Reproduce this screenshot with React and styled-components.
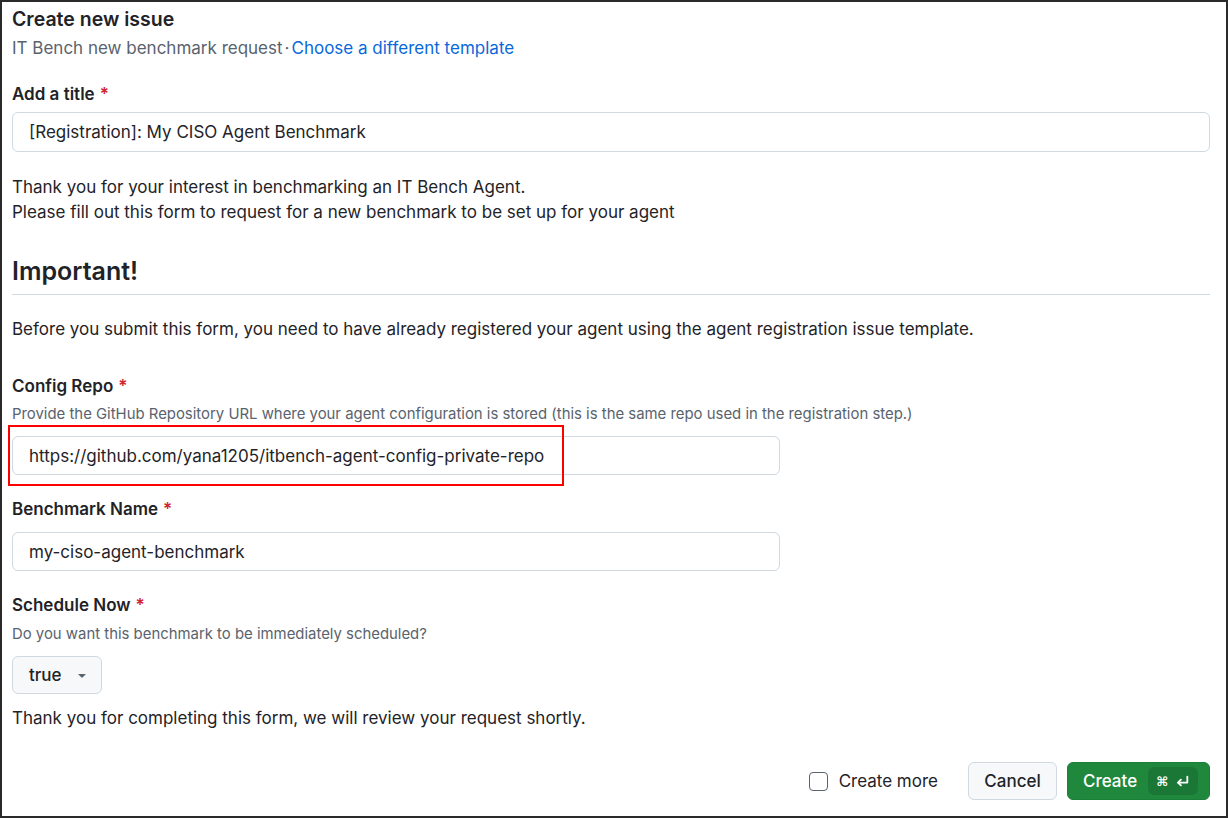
import React from "react";
import styled, { createGlobalStyle } from "styled-components";

const Global = createGlobalStyle`
  html, body { margin: 0; padding: 0; background: #fff; }
  body { font-family: Inter, "Noto Sans", "Liberation Sans", sans-serif; color: #1f2328; }
  * { box-sizing: border-box; }
`;

const Frame = styled.div`
  width: 1228px;
  height: 818px;
  border: 2px solid #2a2a2a;
  padding: 5px 16px 0 10px;
  display: flex;
  flex-direction: column;
  background: #fff;
`;

const PageTitle = styled.h1`
  margin: 0;
  font-size: 19.5px;
  line-height: 24px;
  font-weight: 600;
`;

const Subtitle = styled.div`
  margin-top: 5px;
  font-size: 17px;
  line-height: 24px;
  color: #59636e;
  display: flex;
  align-items: center;
`;

const Dot = styled.span`
  margin: 0 2px;
`;

const Link = styled.a`
  color: #0969da;
  text-decoration: none;
`;

const Field = styled.div`
  margin-top: ${(p) => p.$mt}px;
  display: flex;
  flex-direction: column;
`;

const Label = styled.label`
  font-size: 17px;
  line-height: 24px;
  font-weight: 600;
`;

const Req = styled.span`
  color: #d1242f;
  margin-left: 5px;
`;

const Hint = styled.div`
  margin-top: ${(p) => p.$mt}px;
  font-size: 14.9px;
  line-height: 20px;
  color: #59636e;
`;

const InputWrap = styled.div`
  position: relative;
  margin-top: ${(p) => p.$mt}px;
  width: ${(p) => p.$w};
`;

const Input = styled.div`
  height: ${(p) => p.$h}px;
  border: 1px solid #d1d9e0;
  border-radius: 6px;
  background: #fff;
  padding: 0 16px;
  display: flex;
  align-items: center;
  font-size: 17px;
  color: #1f2328;
`;

const Highlight = styled.div`
  position: absolute;
  left: -4px;
  top: -11px;
  width: 556px;
  height: 61px;
  border: 2px solid #ff0000;
  pointer-events: none;
`;

const Para = styled.p`
  margin: ${(p) => p.$mt}px 0 0;
  font-size: 17px;
  line-height: 25px;
`;

const Heading = styled.h2`
  margin: 31px 0 0;
  font-size: 25px;
  line-height: 30px;
  font-weight: 600;
  padding-bottom: 8px;
  border-bottom: 1px solid #d1d9e0;
`;

const SelectButton = styled.div`
  margin-top: 12px;
  width: 90px;
  height: 38px;
  border: 1px solid #d1d9e0;
  border-radius: 6px;
  background: #f6f8fa;
  display: flex;
  align-items: center;
  padding: 0 0 0 16px;
  gap: 12px;
  font-size: 17px;
  font-weight: 500;
`;

const Footer = styled.div`
  margin-top: auto;
  margin-bottom: 16px;
  display: flex;
  align-items: center;
  justify-content: flex-end;
  gap: 10px;
`;

const CheckRow = styled.label`
  display: flex;
  align-items: center;
  gap: 11px;
  font-size: 17px;
  margin-right: 20px;
`;

const CheckBox = styled.span`
  width: 19px;
  height: 19px;
  border: 1px solid #59636e;
  border-radius: 4px;
  background: #fff;
`;

const Button = styled.button`
  height: 38px;
  border-radius: 6px;
  font-family: inherit;
  font-size: 17px;
  font-weight: 500;
  display: flex;
  align-items: center;
  gap: 11px;
  padding: 0 15px;
  border: 1px solid ${(p) => (p.$primary ? "#1a7f37" : "#d1d9e0")};
  background: ${(p) => (p.$primary ? "#1f883d" : "#f6f8fa")};
  color: ${(p) => (p.$primary ? "#fff" : "#1f2328")};
  width: ${(p) => p.$w}px;
  justify-content: ${(p) => (p.$primary ? "flex-start" : "center")};
`;

const Kbd = styled.span`
  display: flex;
  align-items: center;
  gap: 7px;
  height: 28px;
  padding: 0 8px;
  border-radius: 6px;
  background: rgba(0, 0, 0, 0.12);
  font-size: 13px;
  font-weight: 700;
  font-family: "DejaVu Sans", sans-serif;
`;

const Caret = () => (
  <svg width="16" height="16" viewBox="0 0 16 16" fill="#59636e">
    <path d="m4.427 7.427 3.396 3.396a.25.25 0 0 0 .354 0l3.396-3.396A.25.25 0 0 0 11.396 7H4.604a.25.25 0 0 0-.177.427Z" />
  </svg>
);

const ReturnIcon = () => (
  <svg width="15" height="15" viewBox="0 0 14 14" fill="none" stroke="#fff" strokeWidth="1.7" strokeLinecap="round" strokeLinejoin="round">
    <path d="M11.5 2.5v5.5H3" />
    <path d="M5.5 5.3 2.8 8l2.7 2.7" />
  </svg>
);

export default function App() {
  return (
    <>
      <Global />
      <Frame>
        <PageTitle>Create new issue</PageTitle>
        <Subtitle>
          IT Bench new benchmark request<Dot>·</Dot>
          <Link href="#">Choose a different template</Link>
        </Subtitle>

        <Field $mt={22}>
          <Label>
            Add a title<Req>*</Req>
          </Label>
          <InputWrap $mt={6} $w="100%">
            <Input $h={40}>[Registration]: My CISO Agent Benchmark</Input>
          </InputWrap>
        </Field>

        <Para $mt={23}>
          Thank you for your interest in benchmarking an IT Bench Agent.
          <br />
          Please fill out this form to request for a new benchmark to be set up for your agent
        </Para>

        <Heading>Important!</Heading>

        <Para $mt={22}>
          Before you submit this form, you need to have already registered your agent using the agent registration issue template.
        </Para>

        <Field $mt={32}>
          <Label>
            Config Repo<Req>*</Req>
          </Label>
          <Hint $mt={6}>
            Provide the GitHub Repository URL where your agent configuration is stored (this is the same repo used in the registration step.)
          </Hint>
          <InputWrap $mt={12} $w="768px">
            <Input $h={39}>https://github.com/yana1205/itbench-agent-config-private-repo</Input>
            <Highlight />
          </InputWrap>
        </Field>

        <Field $mt={22}>
          <Label>
            Benchmark Name<Req>*</Req>
          </Label>
          <InputWrap $mt={11} $w="768px">
            <Input $h={39}>my-ciso-agent-benchmark</Input>
          </InputWrap>
        </Field>

        <Field $mt={22}>
          <Label>
            Schedule Now<Req>*</Req>
          </Label>
          <Hint $mt={7}>Do you want this benchmark to be immediately scheduled?</Hint>
          <SelectButton>
            true
            <Caret />
          </SelectButton>
        </Field>

        <Para $mt={12}>Thank you for completing this form, we will review your request shortly.</Para>

        <Footer>
          <CheckRow>
            <CheckBox />
            Create more
          </CheckRow>
          <Button $w={89}>Cancel</Button>
          <Button $primary $w={143}>
            Create
            <Kbd>
              <span>⌘</span>
              <ReturnIcon />
            </Kbd>
          </Button>
        </Footer>
      </Frame>
    </>
  );
}
